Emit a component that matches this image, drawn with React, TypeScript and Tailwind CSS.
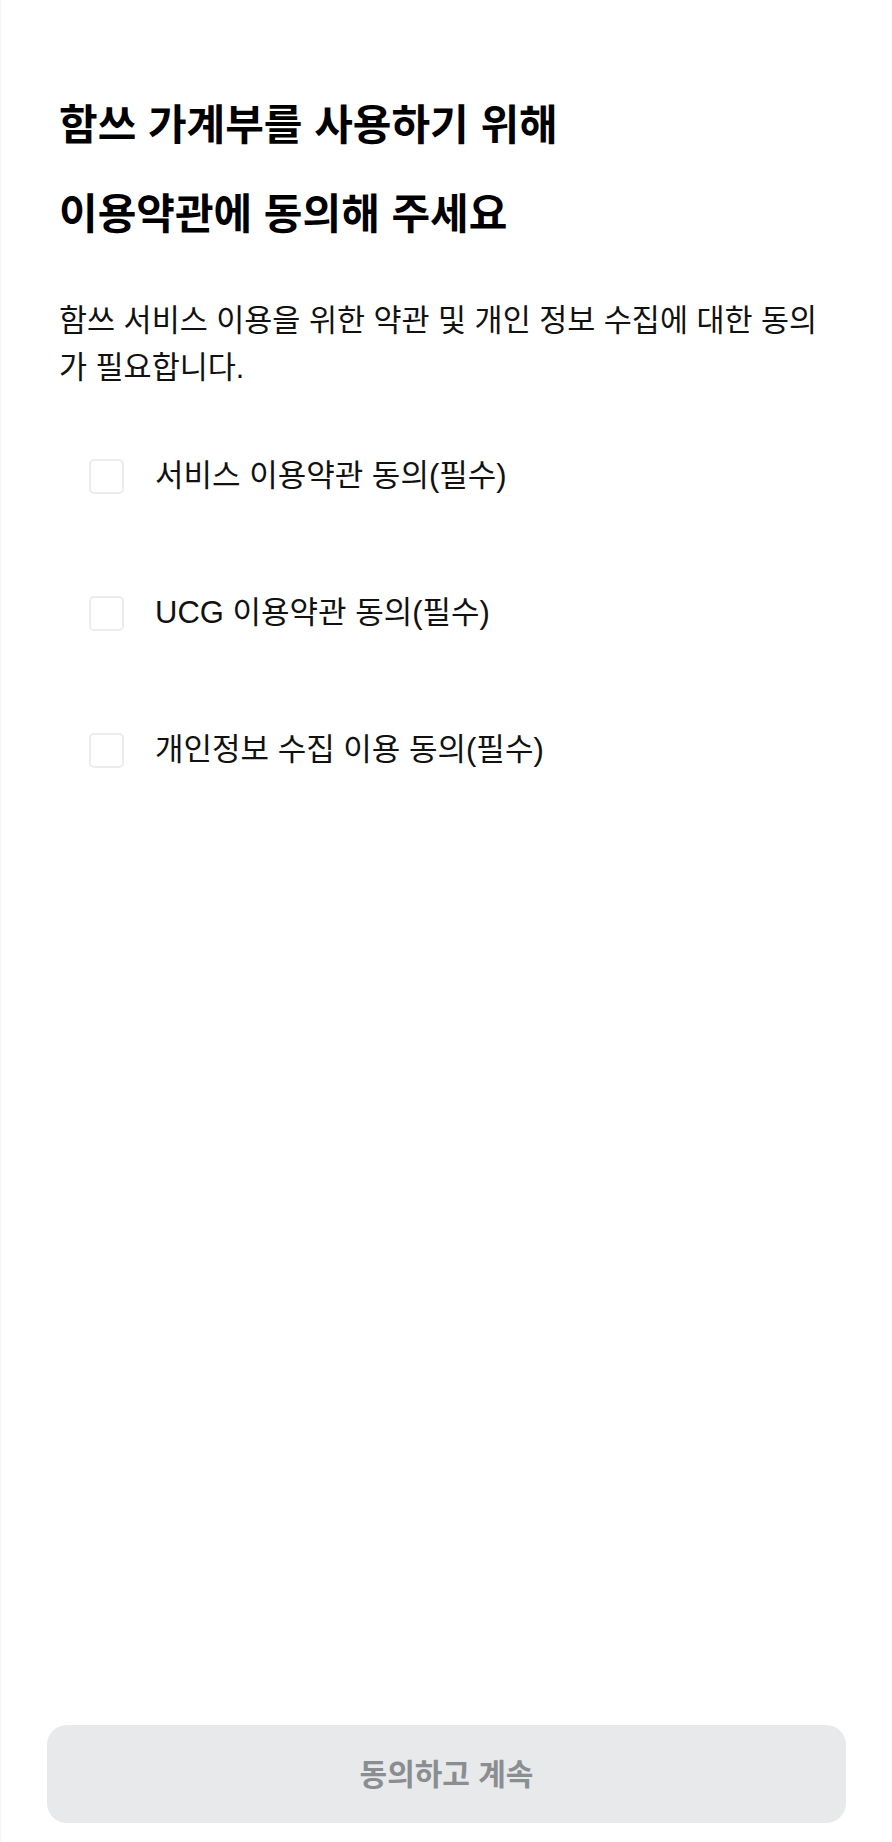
import React, { useState } from "react";

const TERMS = [
  { id: "service", label: "서비스 이용약관 동의(필수)" },
  { id: "ucg", label: "UCG 이용약관 동의(필수)" },
  { id: "privacy", label: "개인정보 수집 이용 동의(필수)" },
];

export default function App() {
  const [checked, setChecked] = useState<Record<string, boolean>>({});
  const allChecked = TERMS.every((t) => checked[t.id]);

  const toggle = (id: string) => setChecked((prev) => ({ ...prev, [id]: !prev[id] }));

  return (
    <div
      className="flex min-h-screen flex-col bg-white border-l border-[#f7f7f7]"
      style={{ fontFamily: '"Liberation Sans", "Noto Sans CJK KR", sans-serif' }}
    >
      <div className="pl-[58px] pr-[60px] pt-[81px]">
        {/* Header */}
        <h1 className="text-[42px] font-bold leading-[89px] text-black">
          함쓰 가계부를 사용하기 위해
          <br />
          이용약관에 동의해 주세요
        </h1>
        <p className="mt-[38px] text-[30.5px] leading-[47px] text-[#111]">
          함쓰 서비스 이용을 위한 약관 및 개인 정보 수집에 대한 동의가 필요합니다.
        </p>

        {/* Terms */}
        <ul className="mt-[17px]">
          {TERMS.map((term) => (
            <li key={term.id} className="flex h-[137px] items-center pl-[30px]">
              <button
                onClick={() => toggle(term.id)}
                className={`flex h-[35px] w-[35px] shrink-0 items-center justify-center rounded-[5px] border-2 ${
                  checked[term.id] ? "border-[#3b82f6] bg-[#3b82f6]" : "border-[#ececec] bg-white"
                }`}
              >
                {checked[term.id] && (
                  <svg width="20" height="20" viewBox="0 0 24 24" fill="none" stroke="white" strokeWidth="3">
                    <path d="M5 12l5 5 9-10" />
                  </svg>
                )}
              </button>
              <span className="ml-[31px] text-[31px] text-[#111]">{term.label}</span>
            </li>
          ))}
        </ul>
      </div>

      {/* Continue */}
      <div className="mt-auto px-[46px] pb-[19px]">
        <button
          disabled={!allChecked}
          className={`h-[98px] w-full rounded-[20px] text-[30px] font-semibold ${
            allChecked ? "bg-[#3b82f6] text-white" : "bg-[#e8e9eb] text-[#8a8d91]"
          }`}
        >
          동의하고 계속
        </button>
      </div>
    </div>
  );
}
